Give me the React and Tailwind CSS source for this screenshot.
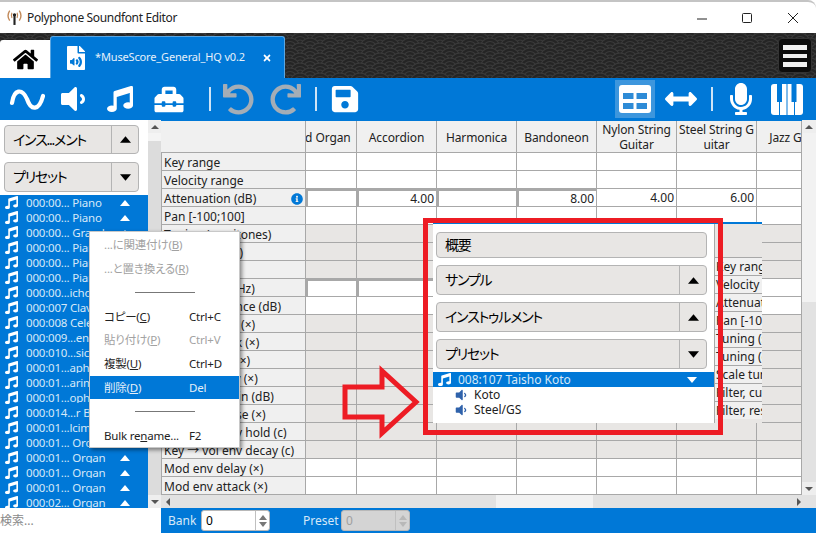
import React from 'react'
import {
  FaHome, FaFileAudio, FaTimes, FaVolumeDown, FaMusic, FaToolbox, FaUndo, FaRedo,
  FaSave, FaArrowsAltH, FaMicrophone, FaInfoCircle,
} from 'react-icons/fa'

const font = "font-['Noto_Sans','Noto_Sans_CJK_JP',sans-serif]"

const presets = [
  '000:00... Piano', '000:00... Piano', '000:00... Grand', '000:00... Piano', '000:00... Piano',
  '000:00... Piano', '000:00...ichord', '000:007 Clavinet', '000:008 Celesta', '000:009...enspiel',
  '000:010...sic Box', '000:01...aphone', '000:01...arimba', '000:01...ophone', '000:014...r Bells',
  '000:01...lcimer', '000:01... Organ', '000:01... Organ', '000:01... Organ', '000:01... Organ',
  '000:02... Organ',
]

const labels = [
  'Key range', 'Velocity range', 'Attenuation (dB)', 'Pan [-100;100]', 'Tuning (semitones)',
  'Tuning (cents)', 'Scale tuning', 'Filter, cutoff (Hz)', 'Filter, resonance (dB)',
  'Vol env delay (×)', 'Vol env attack (×)', 'Vol env hold (×)', 'Vol env decay (×)',
  'Vol env sustain (dB)', 'Vol env release (×)', 'Key → vol env hold (c)', 'Key → vol env decay (c)',
  'Mod env delay (×)', 'Mod env attack (×)',
]

const greyRows = [4, 5, 6, 9, 10, 11, 12, 13, 14, 15, 16]

// value + whether the cell is a boxed field, by row
const cells = {
  2: [['', true], ['4.00', true], ['', true], ['8.00', true], ['4.00', false], ['6.00', false], ['', false]],
  7: [['', true], ['', true]],
}

const headers = ['Reed Organ', 'Accordion', 'Harmonica', 'Bandoneon', 'Nylon String Guitar', 'Steel String G uitar', 'Jazz Guitar']

function Tri({ down, className = 'text-black', size = 11 }) {
  return (
    <svg width={size} height={Math.round(size * 0.6)} viewBox="0 0 10 6" className={className}>
      <path d={down ? 'M0 0H10L5 6Z' : 'M5 0L10 6H0Z'} fill="currentColor" />
    </svg>
  )
}

function PanelButton({ label, arrow, className }) {
  return (
    <div className={`flex rounded-[4px] border border-[#b4b4b4] bg-[#e8e6e4] ${className}`}>
      <div className="flex-1 pl-2 pb-px flex items-center text-[14px] tracking-[-1.2px] text-black">{label}</div>
      {arrow && (
        <div className="w-[27px] border-l border-[#b4b4b4] flex items-center justify-center">
          <Tri down={arrow === 'down'} />
        </div>
      )}
    </div>
  )
}

function Pattern() {
  const rows = []
  for (let r = 0; r < 11; r++) {
    for (let c = 0; c < 43; c++) {
      const x = c * 20 + (r % 2 ? 10 : 0)
      const y = r * 5
      rows.push(
        <g key={r + '-' + c} fill="#252525" stroke="#3b3b3b" strokeWidth="1.2">
          <circle cx={x} cy={y} r="10" />
          <circle cx={x} cy={y} r="6.5" />
          <circle cx={x} cy={y} r="3" />
        </g>
      )
    }
  }
  return <svg className="absolute inset-0" width="816" height="45">{rows}</svg>
}

function MenuItem({ label, shortcut, disabled, active }) {
  const color = active ? 'bg-[#0078d7] text-[#e4eef8]' : disabled ? 'text-[#a2a2a2]' : 'text-[#222]'
  return (
    <div className={`h-[25px] flex items-center pl-[14px] text-[11.5px] tracking-[-0.2px] ${color}`}>
      <span className="w-[85px] whitespace-nowrap">{label}</span>
      <span>{shortcut}</span>
    </div>
  )
}

function MenuSep() {
  return (
    <div className="h-[25px] flex items-center pl-[45px]">
      <div className="w-[60px] h-px bg-[#777]" />
    </div>
  )
}

function ScrollArrow({ down, horizontal }) {
  return (
    <svg width="8" height="8" viewBox="0 0 8 8" className="text-[#555]">
      <path d={horizontal ? (down ? 'M2 0L6 4L2 8Z' : 'M6 0L2 4L6 8Z') : (down ? 'M0 2H8L4 6Z' : 'M4 2L8 6H0Z')} fill="currentColor" />
    </svg>
  )
}

function Spin({ value, disabled, className }) {
  return (
    <div className={`h-[21px] flex rounded-[3px] border border-[#b8b8b8] ${disabled ? 'bg-[#d4d4d4] text-[#a0a0a0]' : 'bg-white text-black'} ${className}`}>
      <div className="flex-1 pl-[4px] flex items-center">{value}</div>
      <div className={`w-[14px] border-l border-[#c0c0c0] flex flex-col items-center justify-center gap-[2px] ${disabled ? 'text-[#b8b8b8]' : 'text-[#777]'}`}>
        <Tri size={8} className="" />
        <Tri size={8} down className="" />
      </div>
    </div>
  )
}

export default function App() {
  return (
    <div className={`relative w-[816px] h-[533px] overflow-hidden flex flex-col bg-white text-[12px] [font-feature-settings:'palt'] ${font}`}>
      {/* title bar */}
      <div className="h-[33px] shrink-0 border-t-2 border-[#c4c4c4] flex items-center text-[#222] rounded-tr-[8px]">
        <svg width="17" height="17" viewBox="0 0 16 16" className="ml-[6px] mr-[4px]" fill="none">
          <path d="M3.5 1.5C1.5 4.5 1.5 8 3.5 11M12.5 1.5C14.5 4.5 14.5 8 12.5 11" stroke="#c28a5a" strokeWidth="1.3" />
          <path d="M5.6 3.5C4.8 5 4.8 7 5.6 8.5M10.4 3.5C11.2 5 11.2 7 10.4 8.5" stroke="#c28a5a" strokeWidth="1.1" />
          <path d="M8 5V15" stroke="#222" strokeWidth="2" />
          <circle cx="8" cy="5.5" r="1.6" fill="#222" />
        </svg>
        <span className="tracking-[-0.35px]">Polyphone Soundfont Editor</span>
        <div className="ml-auto flex items-center text-[#222]">
          <svg width="10" height="10" viewBox="0 0 10 10" className="mr-[35px]"><path d="M0 6H10" stroke="currentColor" strokeWidth="1" /></svg>
          <svg width="10" height="10" viewBox="0 0 10 10" className="mr-[36px]"><rect x="0.5" y="0.5" width="9" height="9" fill="none" stroke="currentColor" strokeWidth="1" rx="1" /></svg>
          <svg width="10" height="10" viewBox="0 0 10 10" className="mr-[18px]"><path d="M0 0L10 10M10 0L0 10" stroke="currentColor" strokeWidth="1" /></svg>
        </div>
      </div>

      {/* tab bar */}
      <div className="relative h-[45px] shrink-0 bg-[#252525] flex items-end overflow-hidden">
        <Pattern />
        <div className="relative w-[50px] h-[38px] bg-white flex items-center justify-center rounded-tl-[3px]">
          <FaHome className="text-black w-[25px] h-[25px]" />
        </div>
        <div className="relative w-[235px] h-[42px] bg-[#0078d7] rounded-t-[3px] border-t border-x border-[#5aa6e2] flex items-center text-[#e6f0fa]">
          <FaFileAudio className="ml-[16px] w-[18px] h-[24px] text-white" />
          <span className="ml-[10px] text-[11px] tracking-[-0.15px] whitespace-nowrap">*MuseScore_General_HQ v0.2</span>
          <FaTimes className="ml-auto mr-[12px] w-[10px] h-[10px] text-white" />
        </div>
        <div className="relative ml-auto mr-[4px] mb-[5px] w-[34px] h-[35px] rounded-[4px] bg-[#0d0d0d] border border-[#333] flex flex-col items-center justify-center gap-[4px]">
          <div className="w-[24px] h-[5px] bg-[#f0f0f0]" />
          <div className="w-[24px] h-[4px] bg-[#f0f0f0]" />
          <div className="w-[24px] h-[5px] bg-[#f0f0f0]" />
        </div>
      </div>

      {/* toolbar */}
      <div className="h-[42px] shrink-0 bg-[#0078d7] flex items-center text-white">
        <svg width="36" height="30" viewBox="0 0 36 30" fill="none" className="ml-[9px]">
          <path d="M3 19C5 5 13 4 18 15C22 27 30 27 34 12" stroke="white" strokeWidth="4.2" strokeLinecap="round" />
        </svg>
        <FaVolumeDown className="ml-[16px] w-[24px] h-[32px]" />
        <FaMusic className="ml-[22px] w-[26px] h-[26px]" />
        <FaToolbox className="ml-[20px] w-[32px] h-[29px]" />
        <div className="ml-[24px] w-[2px] h-[24px] bg-[#cfe4f6]" />
        <FaUndo className="ml-[12px] w-[31px] h-[31px] text-[#a4adb6]" />
        <FaRedo className="ml-[16px] w-[31px] h-[31px] text-[#a4adb6]" />
        <div className="ml-[14px] w-[2px] h-[24px] bg-[#cfe4f6]" />
        <FaSave className="ml-[13px] w-[30px] h-[30px]" />
        <div className="ml-[255px] w-[40px] h-[38px] bg-[#3d96dd] flex items-center justify-center">
          <svg width="32" height="28" viewBox="0 0 32 28">
            <rect width="32" height="28" rx="3" fill="white" />
            <rect x="4" y="8" width="10.5" height="6" fill="#2e8bd6" />
            <rect x="17.5" y="8" width="10.5" height="6" fill="#2e8bd6" />
            <rect x="4" y="18" width="10.5" height="6" fill="#2e8bd6" />
            <rect x="17.5" y="18" width="10.5" height="6" fill="#2e8bd6" />
          </svg>
        </div>
        <FaArrowsAltH className="ml-[10px] w-[32px] h-[32px]" />
        <div className="ml-[14px] w-[2px] h-[24px] bg-[#cfe4f6]" />
        <FaMicrophone className="ml-[17px] w-[22px] h-[32px]" />
        <svg width="32" height="31" viewBox="0 0 32 31" className="ml-[19px]">
          <rect width="32" height="31" rx="3" fill="white" />
          <rect x="6" y="-1" width="5" height="19" fill="#0078d7" />
          <rect x="20.5" y="-1" width="5" height="19" fill="#0078d7" />
          <rect x="8" y="17" width="1" height="14" fill="#0078d7" />
          <rect x="15.5" y="0" width="1" height="31" fill="#0078d7" />
          <rect x="23" y="17" width="1" height="14" fill="#0078d7" />
        </svg>
      </div>

      {/* main */}
      <div className="flex-1 min-h-0 flex">
        {/* left: tree */}
        <div className="w-[148px] shrink-0 flex flex-col">
          <div className="pt-[5px] pl-[4px] pr-[9px] flex flex-col gap-[8px]">
            <PanelButton label="インス...メント" arrow="up" className="h-[29px]" />
            <PanelButton label="プリセット" arrow="down" className="h-[30px]" />
          </div>
          <div className="mt-[3px] flex-1 overflow-hidden bg-[#0078d7] text-[#d6e8f8]">
            {presets.map((name, i) => (
              <div key={i} className="h-[15px] flex items-center text-[11.5px] tracking-[-0.2px] leading-none">
                <FaMusic className="ml-[5px] w-[13px] h-[13px] text-white shrink-0" />
                <span className="ml-[8px] w-[94px] whitespace-nowrap overflow-hidden">{name}</span>
                <Tri size={10} className="text-white" />
              </div>
            ))}
          </div>
        </div>
        <div className="w-[13px] shrink-0 flex flex-col bg-[#dcdcdc]">
          <div className="h-[13px] bg-[#eee] flex items-center justify-center"><ScrollArrow /></div>
          <div className="h-[8px] bg-[#f4f4f4]" />
          <div className="flex-1" />
          <div className="h-[13px] bg-[#eee] flex items-center justify-center"><ScrollArrow down /></div>
        </div>

        {/* right: table */}
        <div className="flex-1 min-w-0 flex flex-col">
          <div className="flex-1 min-h-0 flex">
            <div className="w-[641px] border-t border-[#0078d7] overflow-hidden text-[#222]">
              <div className="grid grid-cols-[145px_51px_repeat(5,80px)_45px]">
                <div className="h-[32px] bg-[#f0f0f0] border-r border-b border-[#a8a8a8]" />
                {headers.map((h, i) => (
                  <div key={i} className={`h-[32px] pt-px bg-[#f0f0f0] border-r border-b border-[#a8a8a8] flex items-center text-center leading-[15px] tracking-[-0.1px] overflow-hidden ${i === 0 ? 'justify-end' : i === 6 ? 'justify-start' : 'justify-center'}`}>
                    <span className={i === 0 || i === 6 ? 'w-[80px] shrink-0 pl-[3px] whitespace-nowrap' : ''}>{h}</span>
                  </div>
                ))}
                {labels.map((label, r) => {
                  const grey = greyRows.includes(r)
                  return (
                    <React.Fragment key={r}>
                      <div className="h-[18px] pt-[2px] bg-[#f0f0f0] border-r border-b border-l border-[#a8a8a8] flex items-center pl-[2px] whitespace-nowrap">
                        <span>{label}</span>
                        {r === 2 && <FaInfoCircle className="ml-auto mr-[2px] w-[12px] h-[12px] text-[#0078d7]" />}
                      </div>
                      {[0, 1, 2, 3, 4, 5, 6].map((c) => {
                        const cell = cells[r] && cells[r][c]
                        return (
                          <div key={c} className={`h-[18px] border-r border-b border-[#a8a8a8] ${grey ? 'bg-[#e8e6e4]' : 'bg-white'} flex items-center justify-end pr-[2px] ${cell && cell[1] ? 'border-2 pr-[1px]' : ''}`}>
                            {cell ? cell[0] : ''}
                          </div>
                        )
                      })}
                    </React.Fragment>
                  )
                })}
              </div>
            </div>
            <div className="w-[14px] shrink-0 flex flex-col bg-[#e2e2e2]">
              <div className="h-[13px] flex items-center justify-center bg-[#eee]"><ScrollArrow /></div>
              <div className="h-[169px] bg-[#f2f2f2]" />
              <div className="flex-1" />
              <div className="h-[13px] flex items-center justify-center bg-[#eee]"><ScrollArrow down /></div>
            </div>
          </div>
          <div className="h-[13px] shrink-0 flex items-center bg-[#e2e2e2]">
            <div className="w-[13px] flex justify-center"><ScrollArrow horizontal /></div>
            <div className="ml-[322px] w-[97px] h-full bg-[#f2f2f2]" />
            <div className="ml-auto mr-[13px]"><ScrollArrow horizontal down /></div>
          </div>
        </div>
      </div>

      {/* bottom bar */}
      <div className="h-[25px] shrink-0 flex items-center">
        <div className="w-[161px] pl-0 text-[#8a8a8a]">検索...</div>
        <div className="flex-1 h-full bg-[#0078d7] flex items-center text-[#d6e8f8]">
          <span className="ml-[7px] w-[33px]">Bank</span>
          <Spin value="0" className="w-[69px]" />
          <span className="ml-[33px] w-[38px]">Preset</span>
          <Spin value="0" disabled className="w-[69px]" />
        </div>
      </div>

      {/* pasted panel, over the table */}
      <div className="absolute left-[433px] top-[222px] w-[329px] h-[201px] flex border-t-2 border-[#0078d7] text-[#222]">
        <div className="w-[282px] bg-white border-r border-[#a8a8a8] flex flex-col">
          <div className="pt-[8px] pl-[3px] pr-[7px] flex flex-col gap-[7px]">
            <PanelButton label="概要" className="h-[26px]" />
            <PanelButton label="サンプル" arrow="up" className="h-[30px]" />
            <PanelButton label="インストゥルメント" arrow="up" className="h-[30px]" />
            <PanelButton label="プリセット" arrow="down" className="h-[30px]" />
          </div>
          <div className="mt-[3px] h-[15px] bg-[#0078d7] flex items-center text-[#d6e8f8]">
            <FaMusic className="ml-[5px] w-[13px] h-[13px] text-white" />
            <span className="ml-[7px] flex-1">008:107 Taisho Koto</span>
            <Tri down size={10} className="text-white mr-[17px]" />
          </div>
          <div className="h-[15px] flex items-center">
            <FaVolumeDown className="ml-[21px] w-[14px] h-[14px] text-[#2f62ab]" />
            <span className="ml-[6px]">Koto</span>
          </div>
          <div className="h-[15px] flex items-center">
            <FaVolumeDown className="ml-[21px] w-[14px] h-[14px] text-[#2f62ab]" />
            <span className="ml-[6px]">Steel/GS</span>
          </div>
        </div>
        <div className="flex-1 bg-[#e8e6e4] overflow-hidden">
          <div className="h-[33px]" />
          {['Key range', 'Velocity range', 'Attenuation', 'Pan [-100;100]', 'Tuning (semi', 'Tuning (cents', 'Scale tuning', 'Filter, cutoff', 'Filter, resona'].map((t) => (
            <div key={t} className="h-[18px] border-t border-[#a8a8a8] bg-[#f0f0f0] flex items-center whitespace-nowrap pl-[1px]">{t}</div>
          ))}
        </div>
      </div>

      {/* red callout */}
      <div className="absolute left-[423px] top-[218px] w-[300px] h-[217px] border-[5px] border-[#ed1c24]" />
      <svg className="absolute left-[340px] top-[365px]" width="84" height="74" viewBox="0 0 84 74" fill="none">
        <path d="M5 22H42V6L76 37L42 68V52H5Z" stroke="#ed1c24" strokeWidth="5" strokeLinejoin="miter" />
      </svg>

      {/* context menu */}
      <div className="absolute left-[89px] top-[231px] w-[151px] h-[217px] bg-white shadow-[2px_2px_4px_rgba(0,0,0,0.45)] border border-[#c8c8c8] pt-[1px] flex flex-col">
        <MenuItem label={<>...に関連付け(<u>B</u>)</>} disabled />
        <MenuItem label={<>...と置き換える(<u>R</u>)</>} disabled />
        <MenuSep />
        <MenuItem label={<>コピー(<u>C</u>)</>} shortcut="Ctrl+C" />
        <MenuItem label={<>貼り付け(<u>P</u>)</>} shortcut="Ctrl+V" disabled />
        <MenuItem label={<>複製(<u>U</u>)</>} shortcut="Ctrl+D" />
        <MenuItem label={<>削除(<u>D</u>)</>} shortcut="Del" active />
        <MenuSep />
        <MenuItem label={<>Bulk re<u>n</u>ame...</>} shortcut="F2" />
      </div>
    </div>
  )
}
